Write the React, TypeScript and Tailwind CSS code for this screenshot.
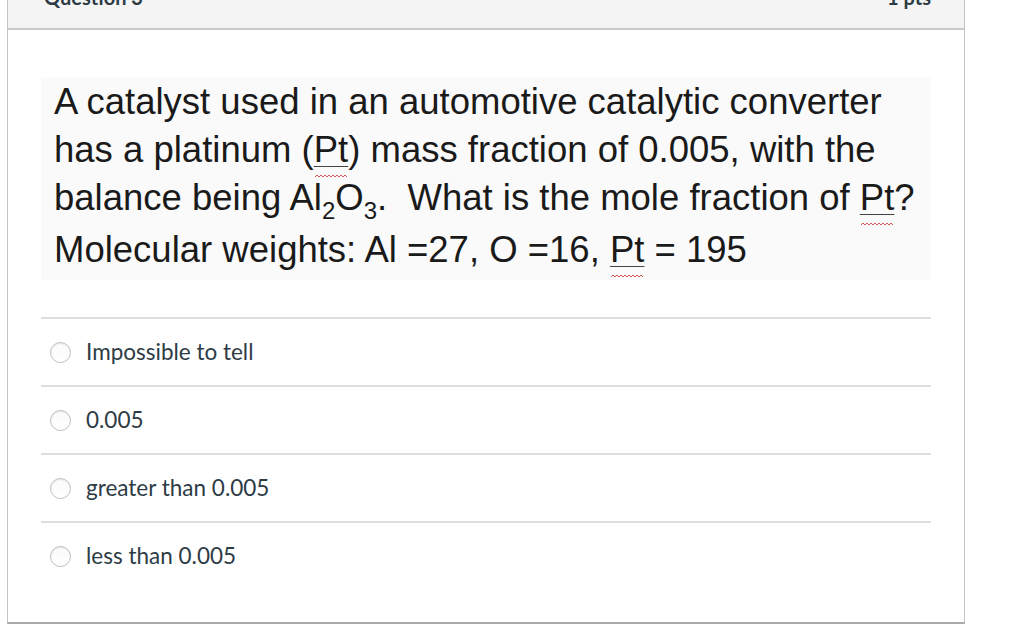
const answers = ['Impossible to tell', '0.005', 'greater than 0.005', 'less than 0.005'];

function Pt({ children }: { children: React.ReactNode }) {
  return (
    <span className="relative underline decoration-[#444] decoration-1 underline-offset-[4px]">
      {children}
      <svg className="absolute left-[1px] bottom-[-8px]" width="34" height="4" viewBox="0 0 34 4">
        <path
          d="M0 3 L2 1 L4 3 L6 1 L8 3 L10 1 L12 3 L14 1 L16 3 L18 1 L20 3 L22 1 L24 3 L26 1 L28 3 L30 1 L32 3"
          fill="none"
          stroke="#d9534f"
          strokeWidth="1"
        />
      </svg>
    </span>
  );
}

export default function App() {
  return (
    <div className="w-[1024px] h-[634px] bg-white overflow-hidden pl-[7px]">
      <div className="w-[958px] mt-[-30px] border border-[#c4c4c4] border-b-2 border-b-[#aaaaaa] bg-white">
        {/* Header */}
        <div className="h-[59px] bg-[#f4f4f4] border-b-2 border-[#c9c9c9] flex justify-between items-start pt-[14px] pl-[36px] pr-[33px] font-['Lato'] font-bold text-[20px] leading-[24px] text-[#2d3b45]">
          <span>Question 3</span>
          <span>1 pts</span>
        </div>

        {/* Body */}
        <div className="px-[33px] pt-[48px] pb-[33px]">
          <div className="bg-[#fafafa] pl-[13px] pb-[6px] font-['Liberation_Sans'] text-[36.5px] leading-[48px] text-[#1a1a1a]">
            <div className="whitespace-nowrap">A catalyst used in an automotive catalytic converter</div>
            <div className="whitespace-nowrap">
              has a platinum (<Pt>Pt</Pt>) mass fraction of 0.005, with the
            </div>
            <div className="whitespace-nowrap">
              balance being Al<span className="relative top-[9px] text-[24px]">2</span>O
              <span className="relative top-[9px] text-[24px]">3</span>.&nbsp; What is the mole fraction of <Pt>Pt</Pt>?
            </div>
            <div className="whitespace-nowrap">
              Molecular weights: Al =27, O =16, <Pt>Pt</Pt> = 195
            </div>
          </div>

          <div className="mt-[37px]">
            {answers.map((a) => (
              <div
                key={a}
                className="h-[68px] border-t-2 border-[#dedede] flex items-center gap-[15px] pl-[9px] font-['Lato'] text-[22.5px] text-[#2d3b45]"
              >
                <span className="w-[21px] h-[21px] rounded-full border border-[#b9bfc4] bg-gradient-to-b from-[#fafafa] to-white shadow-[inset_0_1px_1px_rgba(0,0,0,0.08)]" />
                <span>{a}</span>
              </div>
            ))}
          </div>
        </div>
      </div>
    </div>
  );
}
